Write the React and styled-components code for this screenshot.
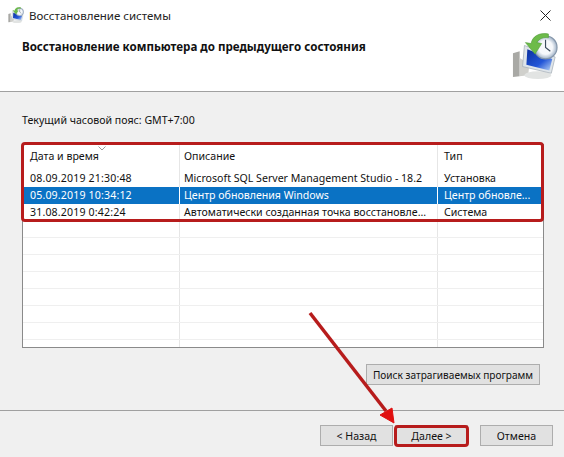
import React from "react";
import styled, { createGlobalStyle } from "styled-components";

const GlobalStyle = createGlobalStyle`
  html, body {
    margin: 0;
    padding: 0;
    background: #f0f0f0;
  }
  body {
    font-family: "Noto Sans", "Open Sans", sans-serif;
    font-size: 10.6px;
    color: #111;
  }
`;

const Window = styled.div`
  position: relative;
  width: 564px;
  height: 457px;
  overflow: hidden;
  display: flex;
  flex-direction: column;
`;

const Header = styled.div`
  height: 92px;
  box-sizing: border-box;
  flex: none;
  background: #fff;
  border-bottom: 1px solid #a0a0a0;
  display: flex;
  flex-direction: column;
`;

const TitleBar = styled.div`
  height: 30px;
  display: flex;
  align-items: center;
  padding: 0 13px 0 8px;
  gap: 5px;
`;

const TitleText = styled.div`
  flex: 1;
  font-size: 11.5px;
  color: #222;
`;

const HeaderBody = styled.div`
  flex: 1;
  display: flex;
  justify-content: space-between;
  padding: 3px 6px 0 22px;
`;

const Heading = styled.div`
  margin-top: 6px;
  font-size: 11.6px;
  font-weight: 700;
  color: #111;
  line-height: 16px;
`;

const Body = styled.div`
  flex: 1;
  display: flex;
  flex-direction: column;
  padding: 19px 21px 0 22px;
`;

const Zone = styled.div`
  height: 20px;
  line-height: 18px;
  margin-bottom: 13px;
`;

const Table = styled.div`
  width: 522px;
  height: 204px;
  box-sizing: border-box;
  background: #fff;
  border: 1px solid #8a8a8a;
  overflow: hidden;
`;

const Row = styled.div`
  display: grid;
  grid-template-columns: 157px 258px 1fr;
  height: ${(props) => (props.$head ? "25px" : "17px")};
  box-sizing: border-box;
  line-height: 16px;
  background: ${(props) => (props.$selected ? "#0a72c4" : "#fff")};
  color: ${(props) => (props.$selected ? "#fff" : "#111")};
  border-bottom: ${(props) => (props.$empty ? "1px solid #efefef" : "none")};
`;

const Cell = styled.div`
  padding-left: ${(props) => props.$indent || 6}px;
  padding-top: ${(props) => (props.$head ? "3px" : "0")};
  white-space: nowrap;
  overflow: hidden;
  letter-spacing: ${(props) => (props.$date ? "0.15px" : "0")};
  border-right: ${(props) =>
    props.$last
      ? "none"
      : props.$selected
        ? "1px solid #fff"
        : "1px solid #e6e6e6"};
`;

const SortMark = styled.svg`
  position: absolute;
  left: 98px;
  top: 146px;
`;

const Actions = styled.div`
  display: flex;
  justify-content: flex-end;
  padding: 16px 3px 0 0;
`;

const Button = styled.button`
  width: ${(props) => props.$width || "73px"};
  height: 21px;
  padding: 0;
  box-sizing: border-box;
  background: #e1e1e1;
  border: 1px solid #adadad;
  font-family: inherit;
  font-size: ${(props) => props.$size || "10.6px"};
  color: #111;
  white-space: nowrap;
`;

const Footer = styled.div`
  height: 47px;
  box-sizing: border-box;
  flex: none;
  border-top: 1px solid #a0a0a0;
  display: flex;
  justify-content: flex-end;
  gap: 2px;
  padding: 14px 11px 0 0;
`;

const CancelButton = styled(Button)`
  margin-left: 10px;
`;

const RedFrame = styled.div`
  position: absolute;
  left: ${(props) => props.$left}px;
  top: ${(props) => props.$top}px;
  width: ${(props) => props.$width}px;
  height: ${(props) => props.$height}px;
  box-sizing: border-box;
  border: 3px solid #b71c1c;
  border-radius: 4px;
  pointer-events: none;
`;

const Arrow = styled.svg`
  position: absolute;
  left: 300px;
  top: 305px;
`;

const CloseIcon = () => (
  <svg width="11" height="11" viewBox="0 0 11 11">
    <path d="M.5.5l10 10M10.5.5l-10 10" stroke="#222" strokeWidth="1" fill="none" />
  </svg>
);

const RestoreIcon = ({ size }) => (
  <svg width={size} height={size} viewBox="0 0 48 48">
    <defs>
      <linearGradient id="screen" x1="0" y1="0" x2="1" y2="1">
        <stop offset="0" stopColor="#0a2f9e" />
        <stop offset="0.6" stopColor="#2356d8" />
        <stop offset="1" stopColor="#bcd6f4" />
      </linearGradient>
      <radialGradient id="clock">
        <stop offset="0.6" stopColor="#f6f8fb" />
        <stop offset="1" stopColor="#9fb1c6" />
      </radialGradient>
    </defs>
    <path d="M1 21l7-2v26l-7 1z" fill="#a9a9a5" />
    <path d="M8 26l10 6-1 12-9 1z" fill="#d0d0cc" />
    <ellipse cx="27" cy="44" rx="14" ry="4" fill="#e2e4e3" />
    <path d="M13 13l32 12-4 17-30-7z" fill="#dfe5ea" stroke="#a8b0b8" strokeWidth="0.8" />
    <path d="M16 17l26 10-3 12-24-6z" fill="url(#screen)" />
    <circle cx="35" cy="15" r="12" fill="url(#clock)" stroke="#8596aa" strokeWidth="1.2" />
    <path d="M35 7v8l5 4" stroke="#3d4c5e" strokeWidth="1.2" fill="none" />
    <path d="M38 1C28-1 21 4 20 11l-6-1 10 12 7-11-5-1c2-4 7-6 12-5z" fill="#6dbb4a" stroke="#4d9a37" strokeWidth="0.6" />
  </svg>
);

const columns = ["Дата и время", "Описание", "Тип"];

const points = [
  {
    date: "08.09.2019 21:30:48",
    text: "Microsoft SQL Server Management Studio - 18.2",
    type: "Установка",
  },
  {
    date: "05.09.2019 10:34:12",
    text: "Центр обновления Windows",
    type: "Центр обновле...",
    selected: true,
  },
  {
    date: "31.08.2019 0:42:24",
    text: "Автоматически созданная точка восстановле...",
    type: "Система",
  },
];

const emptyRows = [0, 1, 2, 3, 4, 5, 6, 7];
const indents = [7, 4, 6];

const App = () => {
  return (
    <Window>
      <GlobalStyle />
      <Header>
        <TitleBar>
          <RestoreIcon size={16} />
          <TitleText>Восстановление системы</TitleText>
          <CloseIcon />
        </TitleBar>
        <HeaderBody>
          <Heading>Восстановление компьютера до предыдущего состояния</Heading>
          <RestoreIcon size={46} />
        </HeaderBody>
      </Header>
      <Body>
        <Zone>Текущий часовой пояс: GMT+7:00</Zone>
        <Table>
          <Row $head>
            {columns.map((name, i) => (
              <Cell key={name} $head $last={i === 2} $indent={indents[i]}>
                {name}
              </Cell>
            ))}
          </Row>
          {points.map((p) => (
            <Row key={p.date} $selected={p.selected}>
              <Cell $date $selected={p.selected} $indent={indents[0]}>
                {p.date}
              </Cell>
              <Cell $selected={p.selected} $indent={indents[1]}>
                {p.text}
              </Cell>
              <Cell $last $indent={indents[2]}>
                {p.type}
              </Cell>
            </Row>
          ))}
          {emptyRows.map((n) => (
            <Row key={n} $empty>
              <Cell />
              <Cell />
              <Cell $last />
            </Row>
          ))}
        </Table>
        <Actions>
          <Button $width="174px" $size="10.1px">
            Поиск затрагиваемых программ
          </Button>
        </Actions>
      </Body>
      <Footer>
        <Button>&lt; Назад</Button>
        <Button>Далее &gt;</Button>
        <CancelButton>Отмена</CancelButton>
      </Footer>
      <SortMark width="8" height="5" viewBox="0 0 8 5">
        <path d="M.5.5L4 4 7.5.5" stroke="#9a9a9a" fill="none" />
      </SortMark>
      <RedFrame $left={21} $top={142} $width={523} $height={80} />
      <RedFrame $left={394} $top={425} $width={75} $height={22} />
      <Arrow width="100" height="125" viewBox="0 0 100 125">
        <path d="M10 8L86 106" stroke="#b71c1c" strokeWidth="3.5" fill="none" />
        <path d="M80 110L92 103 94 118z" fill="#e01010" stroke="#e01010" />
      </Arrow>
    </Window>
  );
};

export default App;
